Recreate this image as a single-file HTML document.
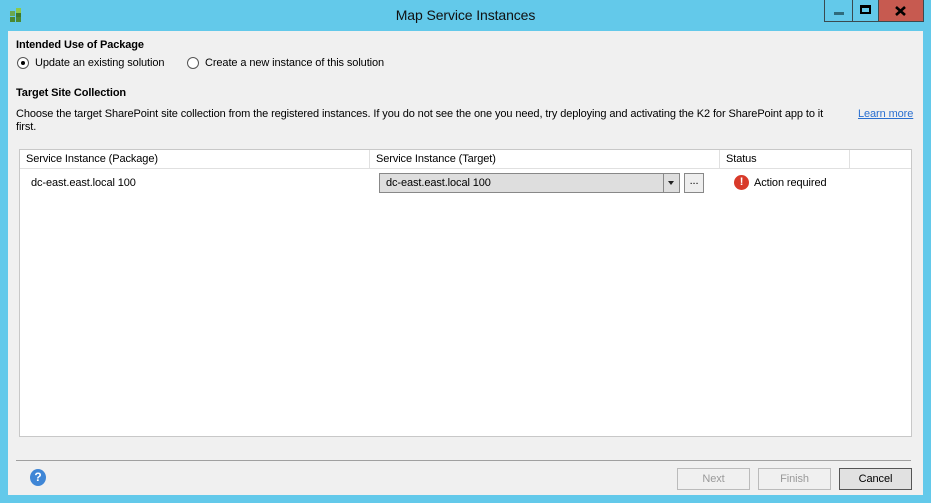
<!DOCTYPE html>
<html><head><style>
*{margin:0;padding:0;box-sizing:border-box}
body{width:931px;height:503px;background:#63c9ea;font-family:"Liberation Sans",sans-serif;font-size:11px;color:#000;position:relative;overflow:hidden;letter-spacing:-0.1px}
.abs{position:absolute}
#content{left:8px;top:31px;width:915px;height:464px;background:#f0f0f0}
.b{font-weight:bold}
.radio{width:12px;height:12px;border:1px solid #555;border-radius:50%;background:#fff}
.btn{height:22px;border:1px solid #bbb;background:#f0f0f0;color:#9a9a9a;text-align:center;line-height:20px;font-size:11px}
</style></head><body>
<svg class="abs" style="left:10px;top:8px" width="16" height="15"><rect x="0" y="3" width="5" height="5" fill="#6aa84f"/><rect x="6" y="0" width="5" height="5" fill="#8cc94a"/><rect x="0" y="9" width="5" height="5" fill="#4a8a32"/><rect x="6" y="9" width="5" height="5" fill="#4a8a32"/><rect x="6" y="5" width="5" height="4" fill="#3e7a2a"/></svg>
<div class="abs" style="left:0;width:931px;top:7px;text-align:center;font-size:14px;color:#111">Map Service Instances</div>
<div class="abs" style="left:824px;top:0;width:100px;height:22px;border:1px solid #3a4a50;border-top:none"></div>
<div class="abs" style="left:852px;top:0;width:1px;height:22px;background:#3a4a50"></div>
<div class="abs" style="left:878px;top:0;width:46px;height:22px;background:#c75a50;border:1px solid #3a4a50;border-top:none"></div>
<div class="abs" style="left:834px;top:12px;width:10px;height:3px;background:#2f6b7c"></div>
<svg class="abs" style="left:859px;top:4px" width="14" height="12"><path d="M1 1H12V10H1Z M3 4H10V8H3Z" fill="#000" fill-rule="evenodd"/></svg>
<svg class="abs" style="left:895px;top:6px" width="12" height="10"><path d="M1 1L10 9M10 1L1 9" stroke="#000" stroke-width="2.6"/></svg>
<div class="abs" id="content"></div>
<div class="abs b" style="left:16px;top:39px">Intended Use of Package</div>
<div class="abs radio" style="left:17px;top:57px"></div><div class="abs" style="left:21px;top:61px;width:4px;height:4px;background:#000;border-radius:50%"></div>
<div class="abs" style="left:35px;top:57px">Update an existing solution</div>
<div class="abs radio" style="left:187px;top:57px"></div>
<div class="abs" style="left:205px;top:57px">Create a new instance of this solution</div>
<div class="abs b" style="left:16px;top:87px">Target Site Collection</div>
<div class="abs" style="left:16px;top:108px;width:825px;line-height:13px">Choose the target SharePoint site collection from the registered instances. If you do not see the one you need, try deploying and activating the K2 for SharePoint app to it first.</div>
<div class="abs" style="left:858px;top:108px;color:#2a6fd0;text-decoration:underline">Learn more</div>
<div class="abs" style="left:19px;top:149px;width:893px;height:288px;background:#fff;border:1px solid #c8c8c8"></div>
<div class="abs" style="left:20px;top:168px;width:891px;height:1px;background:#e0e0e0"></div>
<div class="abs" style="left:369px;top:150px;width:1px;height:18px;background:#e0e0e0"></div>
<div class="abs" style="left:719px;top:150px;width:1px;height:18px;background:#e0e0e0"></div>
<div class="abs" style="left:849px;top:150px;width:1px;height:18px;background:#e0e0e0"></div>
<div class="abs" style="left:26px;top:153px">Service Instance (Package)</div>
<div class="abs" style="left:376px;top:153px">Service Instance (Target)</div>
<div class="abs" style="left:726px;top:153px">Status</div>
<div class="abs" style="left:31px;top:177px">dc-east.east.local 100</div>
<div class="abs" style="left:379px;top:173px;width:301px;height:20px;background:#dedede;border:1px solid #888"></div>
<div class="abs" style="left:663px;top:174px;width:1px;height:18px;background:#888"></div>
<div class="abs" style="left:386px;top:177px">dc-east.east.local 100</div>
<div class="abs" style="left:668px;top:181px;width:0;height:0;border-left:3px solid transparent;border-right:3px solid transparent;border-top:4px solid #222"></div>
<div class="abs" style="left:684px;top:173px;width:20px;height:20px;border:1px solid #888;background:#eee;text-align:center;line-height:14px">...</div>
<div class="abs" style="left:734px;top:175px;width:15px;height:15px;border-radius:50%;background:#d83a2a;color:#fff;font-weight:bold;text-align:center;line-height:15px;font-size:11px">!</div>
<div class="abs" style="left:754px;top:177px">Action required</div>
<div class="abs" style="left:16px;top:460px;width:895px;height:1px;background:#a0a0a0"></div>
<div class="abs" style="left:30px;top:469px;width:16px;height:17px;border-radius:50%;background:#3f86d6;color:#fff;font-weight:bold;text-align:center;line-height:17px;font-size:12px">?</div>
<div class="abs btn" style="left:677px;top:468px;width:73px">Next</div>
<div class="abs btn" style="left:758px;top:468px;width:73px">Finish</div>
<div class="abs btn" style="left:839px;top:468px;width:73px;border-color:#555;background:#e1e1e1;color:#000">Cancel</div>
</body></html>
